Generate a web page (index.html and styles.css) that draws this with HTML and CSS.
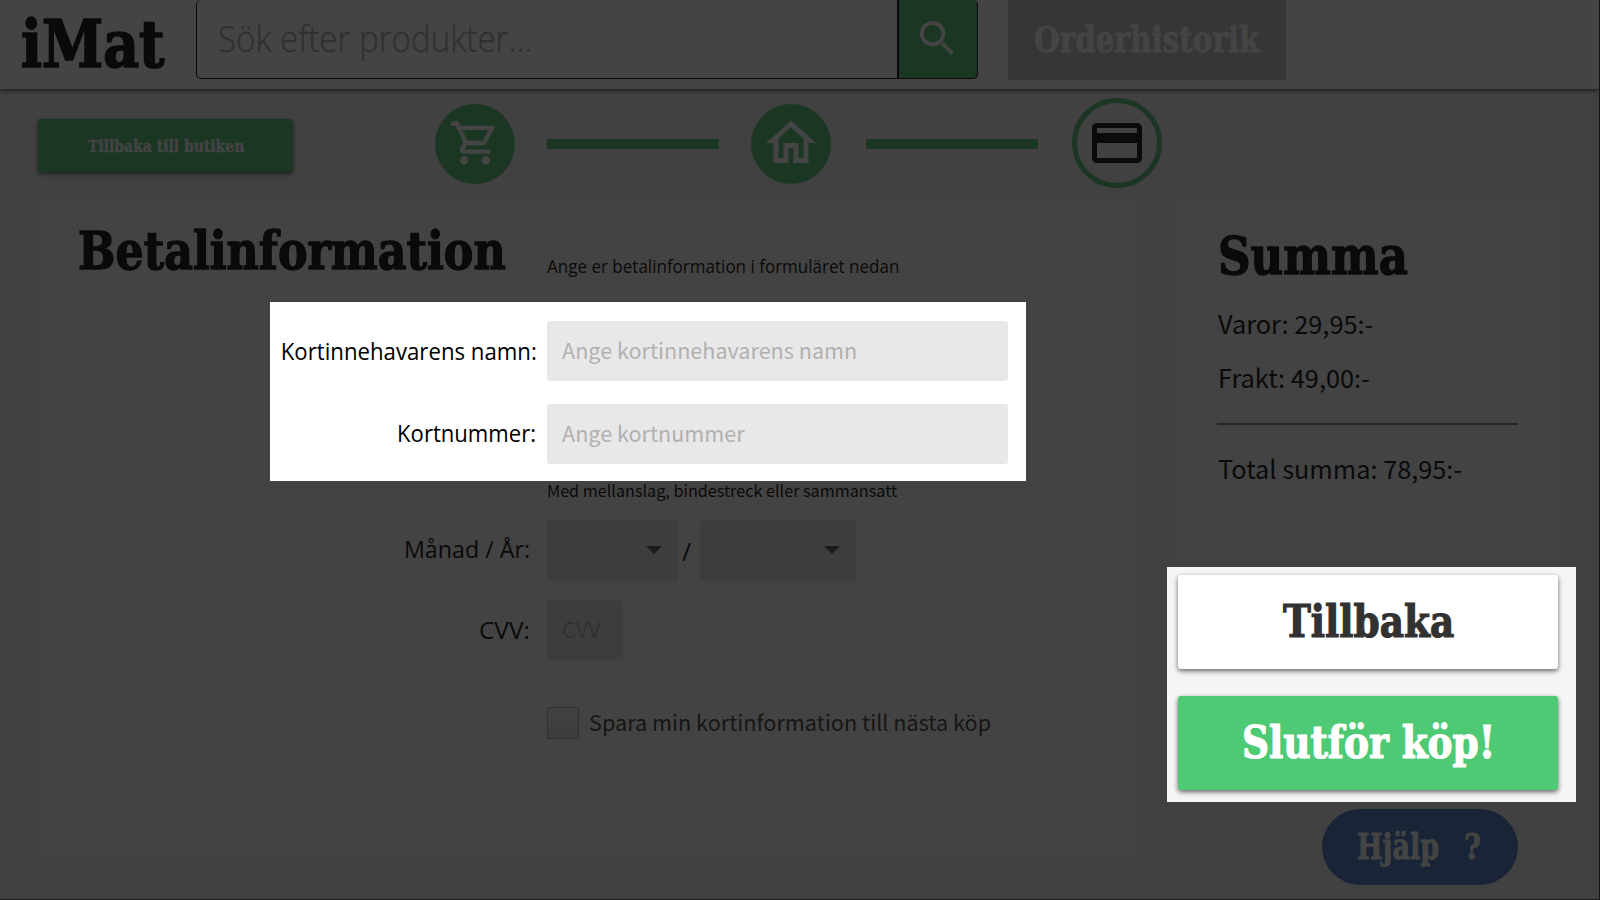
FILE: index.html
```html
<!DOCTYPE html>
<html lang="sv">
<head>
<meta charset="utf-8">
<title>iMat – Betalinformation</title>
<link rel="stylesheet" href="styles.css">
</head>
<body>
<div class="app">
  <header class="topbar">
    <div class="logo slab"><span class="fit">iMat</span></div>
    <div class="search">
      <div class="search-input"><span>Sök efter produkter...</span></div>
      <div class="search-btn"><svg width="47" height="47" viewBox="0 0 24 24"><path d="M15.500 14h-.79l-.28-.27A6.471 6.471 0 0 0 16 9.500 6.500 6.500 0 1 0 9.500 16c1.610 0 3.090-.59 4.230-1.570l.27.28v.79l5 4.990L20.490 19l-4.990-5zm-6 0C7.010 14 5 11.990 5 9.500S7.010 5 9.500 5 14 7.010 14 9.500 11.990 14 9.500 14z"/></svg></div>
    </div>
    <div class="orders slab"><span class="fit">Orderhistorik</span></div>
  </header>

  <nav class="steps">
    <div class="back-shop slab"><span class="fit">Tillbaka till butiken</span></div>
    <div class="step step-cart"><svg width="52" height="52" viewBox="0 0 24 24"><path d="M15.550 13c.75 0 1.410-.41 1.750-1.030l3.580-6.490c.37-.66-.11-1.480-.87-1.480H5.210l-.94-2H1v2h2l3.600 7.590-1.350 2.440C4.520 15.370 5.480 17 7 17h12v-2H7l1.100-2h7.450zM6.160 6h12.150l-2.760 5H8.530L6.160 6zM7 18c-1.100 0-1.990.9-1.990 2S5.900 22 7 22s2-.9 2-2-.9-2-2-2zm10 0c-1.100 0-1.990.9-1.990 2s.89 2 1.990 2 2-.9 2-2-.9-2-2-2z"/></svg></div>
    <div class="bar"></div>
    <div class="step step-home"><svg width="60" height="60" viewBox="0 0 24 24"><path d="M12 5.690l5 4.500V18h-2v-6H9v6H7v-7.810l5-4.500M12 3L2 12h3v8h6v-6h2v6h6v-8h3L12 3z"/></svg></div>
    <div class="bar bar-second"></div>
    <div class="step step-card"><svg width="60" height="60" viewBox="0 0 24 24"><path d="M20 4H4c-1.110 0-1.990.89-1.990 2L2 18c0 1.110.89 2 2 2h16c1.110 0 2-.89 2-2V6c0-1.110-.89-2-2-2zm0 14H4v-6h16v6zm0-10H4V6h16v2z"/></svg></div>
  </nav>

  <main class="content">
    <section class="panel payment">
      <div class="title-row">
        <h1 class="slab"><span class="fit">Betalinformation</span></h1>
        <p class="intro">Ange er betalinformation i formuläret nedan</p>
      </div>
      <div class="spotlight">
        <label class="label label-name">Kortinnehavarens namn:</label>
        <div class="field ph-name"><span>Ange kortinnehavarens namn</span></div>
        <label class="label label-number">Kortnummer:</label>
        <div class="field ph-number"><span>Ange kortnummer</span></div>
      </div>
      <p class="note">Med mellanslag, bindestreck eller sammansatt</p>
      <div class="row">
        <label class="label label-date">Månad / År:</label>
        <div class="select month"><i class="arrow"></i></div>
        <span class="slash">/</span>
        <div class="select year"><i class="arrow"></i></div>
      </div>
      <div class="row row-cvv">
        <label class="label label-cvv">CVV:</label>
        <div class="field cvv"><span>CVV</span></div>
      </div>
      <div class="row-save">
        <div class="checkbox"></div>
        <span class="save">Spara min kortinformation till nästa köp</span>
      </div>
    </section>

    <aside class="side">
      <section class="panel summary">
        <h2 class="slab"><span class="fit">Summa</span></h2>
        <p class="goods">Varor: 29,95:-</p>
        <p class="freight">Frakt: 49,00:-</p>
        <div class="rule"></div>
        <p class="total">Total summa: 78,95:-</p>
      </section>
      <div class="actions">
        <div class="btn btn-back slab"><span class="fit">Tillbaka</span></div>
        <div class="btn btn-pay slab"><span class="fit">Slutför köp!</span></div>
      </div>
      <div class="help slab"><span class="fit help-text">Hjälp</span><span class="fit help-mark">?</span></div>
    </aside>
  </main>
</div>
</body>
</html>
```

FILE: styles.css
```css
* { box-sizing: border-box; }
body { margin: 0; background: #141414; }
h1, h2, p { margin: 0; font-weight: normal; }
svg { display: block; }

.app {
  width: 1600px;
  height: 900px;
  overflow: hidden;
  background: #414141;
  border-right: 1px solid #141414;
  border-bottom: 1px solid #1c1a1b;
  font-family: "Noto Sans CJK SC", "Noto Sans", sans-serif;
  color: #0a0a0a;
  white-space: nowrap;
}

.slab {
  font-family: "DejaVu Serif Condensed", "DejaVu Serif", serif;
  font-stretch: condensed;
  font-weight: bold;
}
.fit { display: inline-block; transform: scaleX(.925); transform-origin: 0 50%; -webkit-text-stroke: .025em; }

/* Top bar */
.topbar {
  display: flex;
  align-items: flex-start;
  height: 89px;
  background: #444;
  box-shadow: 0 1px 5px rgba(0, 0, 0, .75);
}
.logo { width: 196px; padding-left: 21px; font-size: 65px; line-height: 88px; }
.logo .fit { transform: scaleX(.945); }
.search { display: flex; width: 782px; height: 79px; }
.search-input {
  width: 702px;
  border: 1px solid #0a0a0a;
  border-top: 0;
  border-radius: 5px 0 0 5px;
  padding-left: 21px;
  font: 300 36px/77px "Open Sans", sans-serif;
  color: #303030;
}
.search-input span { display: inline-block; transform: scaleX(.92); transform-origin: 0 50%; -webkit-text-stroke: .4px; }
.search-btn {
  width: 80px;
  border: 1px solid #0a0a0a;
  border-top: 0;
  border-radius: 0 5px 5px 0;
  background: #1c3624;
  padding: 15px 0 0 15px;
}
.search-btn svg, .step svg { fill: #444; }
.orders {
  width: 278px;
  height: 80px;
  margin-left: 30px;
  padding-left: 26px;
  border-radius: 0 0 3px 3px;
  background: #363636;
  color: #444;
  font-size: 35px;
  line-height: 79px;
}
.orders .fit { transform: scaleX(.935); }

/* Checkout steps */
.steps { display: flex; align-items: center; height: 110px; padding-left: 38px; }
.back-shop {
  width: 255px;
  height: 53px;
  margin-top: 3px;
  padding-left: 50px;
  border-radius: 3px;
  background: #1c3624;
  box-shadow: 0 2px 4px rgba(0, 0, 0, .5);
  color: #444;
  font-size: 17px;
  line-height: 55px;
}
.back-shop .fit { transform: scaleX(.913); }
.step {
  display: flex;
  align-items: center;
  justify-content: center;
  width: 80px;
  height: 80px;
  border-radius: 50%;
  background: #1c3624;
}
.step svg { margin-top: -2px; }
.step-cart { margin-left: 142px; }
.bar { width: 172px; height: 10px; margin: 0 32px; background: #1c3624; }
.bar-second { margin: 0 34px 0 35px; }
.step-card { width: 90px; height: 90px; margin-top: -2px; border: 5px solid #1c3624; background: none; }
.step-card svg { fill: #0a0a0a; margin: 0; }

/* Panels */
.content { display: flex; padding-left: 38px; }
.panel { background: #434343; }
.payment { width: 1100px; height: 655px; }
.title-row { display: flex; height: 103px; }
h1 { width: 509px; padding-left: 40px; font-size: 53px; line-height: 102px; }
h1 .fit { transform: scaleX(.93); }
.intro {
  padding-top: 53px;
  font: 18.500px/28px "Open Sans", sans-serif;
  transform: scaleX(.92);
  transform-origin: 0 50%;
}

.spotlight {
  display: grid;
  grid-template-columns: 266px 461px;
  grid-auto-rows: 60px;
  gap: 23px 11px;
  width: 756px;
  height: 179px;
  margin-left: 232px;
  padding: 19px 18px 0 0;
  background: #fff;
}
.label {
  font: 24px/60px "Open Sans", sans-serif;
  text-align: right;
  transform: scaleX(.925);
  transform-origin: 100% 50%;
}
.spotlight .label { justify-self: end; color: #000; }
.label-name { margin-right: -1px; }
.spotlight .label-number { line-height: 58px; transform: scaleX(.92); }
.field, .select { border-radius: 3px; }
.field { padding-left: 15px; font-size: 21.600px; line-height: 57px; background: #e8e8e8; color: #b1b1b1; }
.note { height: 39px; padding-left: 509px; font-size: 16.200px; line-height: 18px; }
.row { display: flex; height: 61px; }
.row .label { width: 492px; margin-right: 17px; }
.row .label-date { line-height: 58px; transform: scaleX(.968); }
.row .label-cvv { transform: scaleX(1.02); }
.select { display: flex; align-items: center; justify-content: flex-end; background: #3d3d3d; }
.month { width: 131px; padding-right: 16px; }
.year { width: 156px; padding-right: 16px; }
.arrow { border: 8px solid transparent; border-top-color: #1b1b1b; border-bottom: 0; margin-top: -2px; }
.slash { width: 22px; padding-left: 4px; font: 25px/62px "Open Sans", sans-serif; }
.row-cvv { height: 60px; margin-top: 19px; }
.cvv { width: 76px; background: #3d3d3d; color: #313131; }
.row-save { display: flex; align-items: center; height: 32px; margin: 47px 0 0 509px; }
.checkbox {
  width: 32px;
  height: 32px;
  border: 1px solid #303030;
  border-radius: 2px;
  background: linear-gradient(#424242, #3c3c3c);
}
.save { padding-left: 10px; font-size: 21.670px; line-height: 32px; margin-top: -3px; color: #161616; }

/* Summary column */
.side { width: 409px; margin-left: 29px; }
.summary { width: 380px; height: 361px; margin-left: 11px; padding: 0 40px; font-size: 25.300px; line-height: 46px; }
h2 { height: 101px; font-size: 53px; line-height: 112px; }
h2 .fit { transform: scaleX(.945); }
.goods { height: 54px; }
.freight { height: 69px; }
.rule { height: 2px; background: #262626; margin: 0 0 0 -1px; }
.total { padding-top: 20px; }
.actions {
  height: 235px;
  margin-top: 7px;
  padding: 8px 18px 0 11px;
  background: #f5f5f5;
}
.btn { height: 94px; border-radius: 3px; box-shadow: 0 2px 5px rgba(0, 0, 0, .6); font-size: 45px; line-height: 94px; }
.btn-back { padding-left: 105px; background: #fff; color: #323232; }
.btn-pay { margin-top: 27px; padding-left: 64px; background: #4ec974; color: #fff; }
.help {
  display: flex;
  width: 196px;
  height: 76px;
  margin: 7px 0 0 155px;
  padding-left: 35px;
  border-radius: 38px;
  background: #192436;
  color: #444;
  font-size: 35px;
  line-height: 76px;
}
.help-text { width: 107px; transform: scaleX(.86); }
```
